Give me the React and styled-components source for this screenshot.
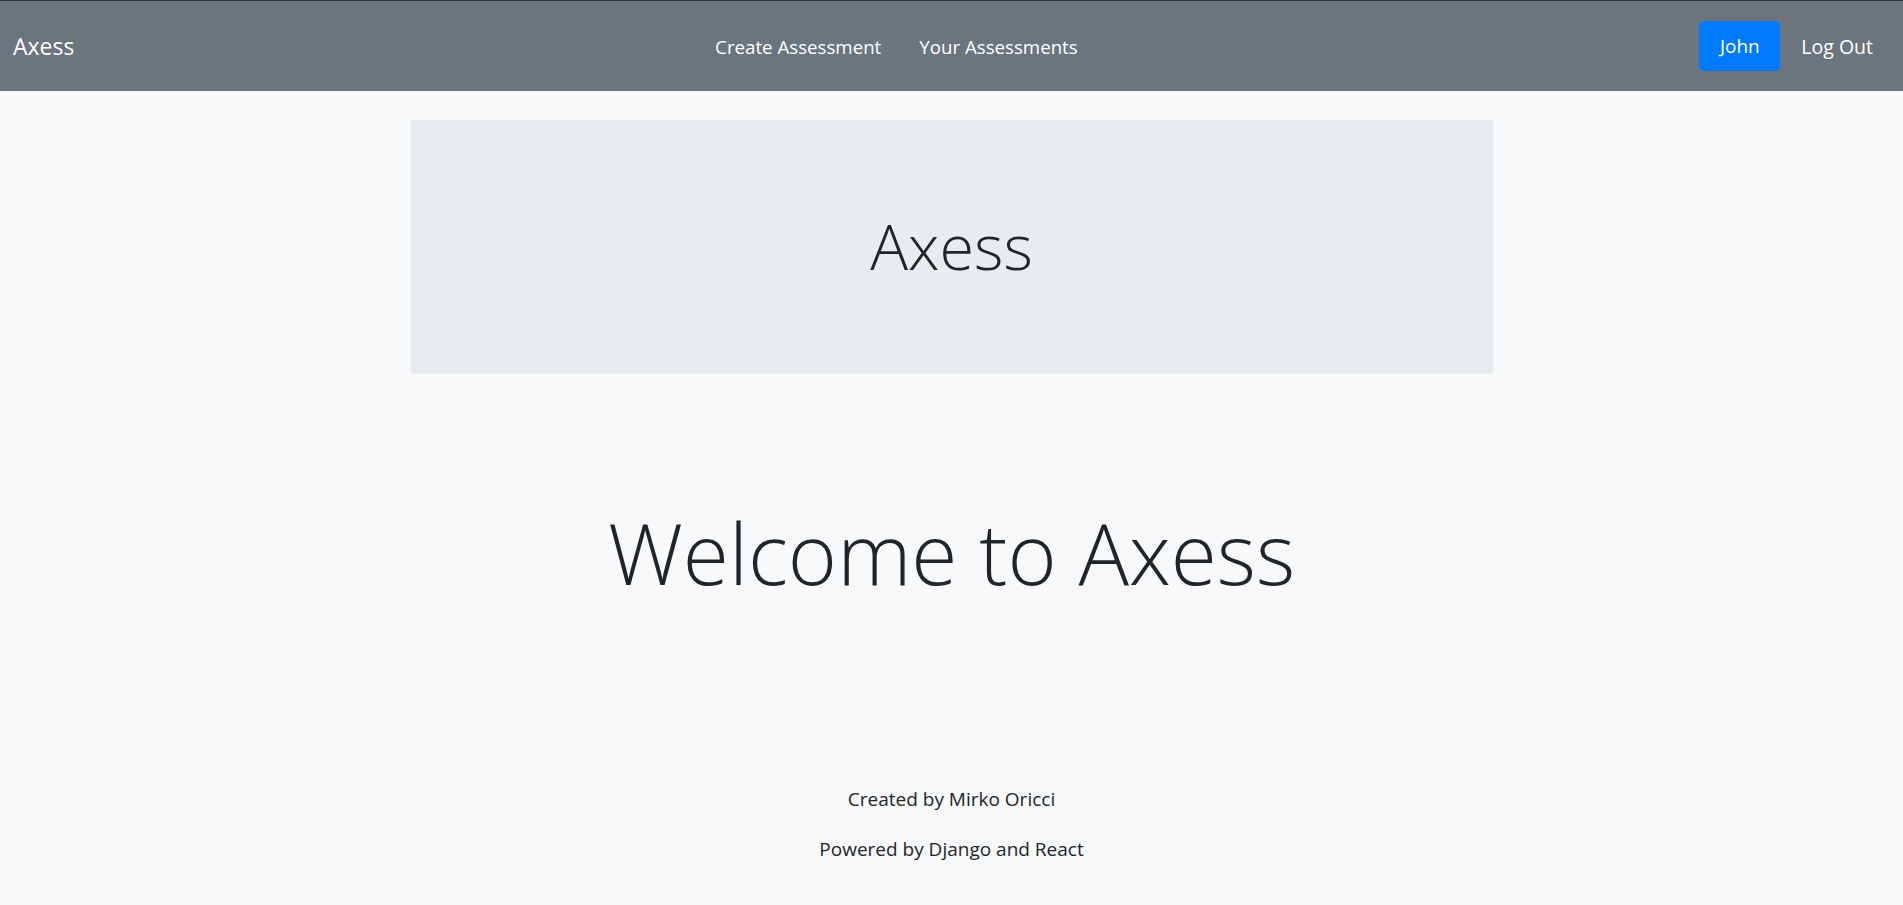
import React from 'react';
import styled, { createGlobalStyle } from 'styled-components';

const GlobalStyle = createGlobalStyle`
  html, body {
    margin: 0;
    padding: 0;
    background: #f8f9fa;
    color: #212529;
    font-family: "Open Sans", "Noto Sans", sans-serif;
  }
  * { box-sizing: border-box; }
`;

const Navbar = styled.nav`
  height: 91px;
  display: flex;
  align-items: center;
  padding: 0 30px 0 13px;
  background: #6c757d;
  border-top: 1px solid #2f3337;
`;

const Brand = styled.a`
  font-size: 23px;
  color: #fff;
  text-decoration: none;
  margin-right: 19px;
`;

const NavLinks = styled.div`
  display: flex;
  margin: 0 auto;
`;

const NavLink = styled.a`
  padding: 0 19px;
  font-size: 18.7px;
  color: #fff;
  text-decoration: none;
`;

const RightGroup = styled.div`
  display: flex;
  align-items: center;
  gap: 21px;
`;

const UserButton = styled.button`
  width: 81px;
  height: 50px;
  border: none;
  border-radius: 5px;
  background: #007bff;
  color: #fff;
  font-family: inherit;
  font-size: 19px;
`;

const LogOut = styled.a`
  font-size: 19.5px;
  color: #fff;
  text-decoration: none;
`;

const Main = styled.main`
  display: flex;
  flex-direction: column;
  align-items: center;
`;

const Jumbotron = styled.section`
  width: 1082px;
  height: 254px;
  margin-top: 29px;
  padding-bottom: 4px;
  display: flex;
  align-items: center;
  justify-content: center;
  background: #e9ecef;
`;

const JumboTitle = styled.h1`
  margin: 0;
  font-size: 63px;
  font-weight: 300;
  line-height: 1;
`;

const Welcome = styled.h2`
  margin: 129px 0 0;
  font-size: 84px;
  font-weight: 300;
  line-height: 1.2;
`;

const Footer = styled.footer`
  margin-top: 180px;
  text-align: center;
`;

const FooterLine = styled.p`
  margin: 0 0 20px;
  font-size: 19px;
  line-height: 30px;
`;

export default function App() {
  return (
    <>
      <GlobalStyle />
      <Navbar>
        <Brand href="#">Axess</Brand>
        <NavLinks>
          <NavLink href="#">Create Assessment</NavLink>
          <NavLink href="#">Your Assessments</NavLink>
        </NavLinks>
        <RightGroup>
          <UserButton>John</UserButton>
          <LogOut href="#">Log Out</LogOut>
        </RightGroup>
      </Navbar>
      <Main>
        <Jumbotron>
          <JumboTitle>Axess</JumboTitle>
        </Jumbotron>
        <Welcome>Welcome to Axess</Welcome>
      </Main>
      <Footer>
        <FooterLine>Created by Mirko Oricci</FooterLine>
        <FooterLine>Powered by Django and React</FooterLine>
      </Footer>
    </>
  );
}
